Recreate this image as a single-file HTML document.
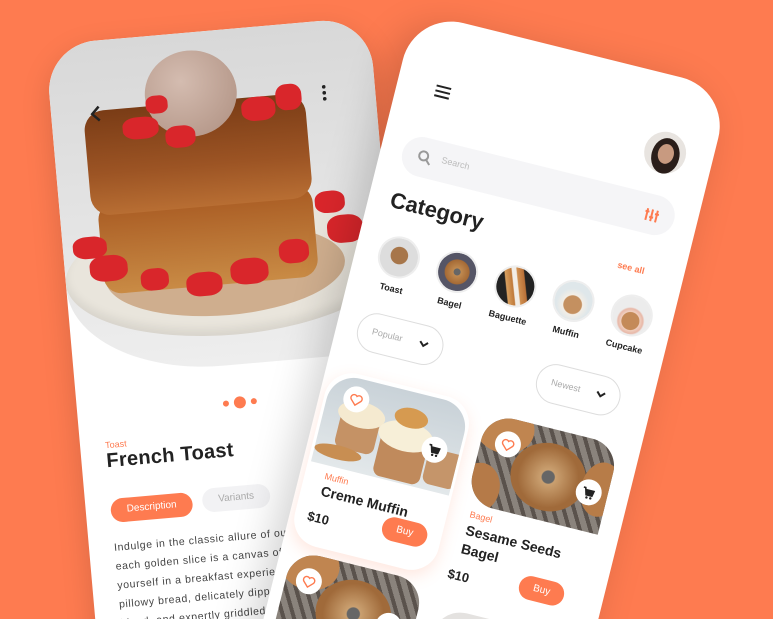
<!DOCTYPE html>
<html><head><meta charset="utf-8">
<style>
*{margin:0;padding:0;box-sizing:border-box}
html,body{width:773px;height:619px;overflow:hidden;background:#FE7B50;font-family:"Liberation Sans",sans-serif}
#W{position:relative;width:773px;height:619px;overflow:hidden;background:#FE7B50}
.abs{position:absolute}
#L{position:absolute;left:45px;top:45px;width:325px;height:700px;background:#fff;border-radius:50px;transform:rotate(-5deg);transform-origin:0 0;overflow:hidden;box-shadow:0 10px 30px rgba(0,0,0,.15)}
#R{position:absolute;left:415px;top:11px;width:325px;height:760px;background:#fff;border-radius:50px;transform:rotate(14deg);transform-origin:0 0;overflow:hidden;box-shadow:-10px 10px 40px rgba(0,0,0,.18)}
.c{border-radius:50%}
.sb{background:#d9262b;border-radius:40%;position:absolute}
.btn{position:absolute;background:#FE7B50;color:#fff;border-radius:20px;font-size:10px;text-align:center}
.pill{position:absolute;border:1px solid #ddd;border-radius:22px;color:#aaa;font-size:9px}
.cat{position:absolute;width:42px;height:42px;border-radius:50%;border:2px solid #eee;overflow:hidden}
.lab{position:absolute;width:60px;text-align:center;font-size:9px;font-weight:bold;color:#222}
.ic{position:absolute;width:26px;height:26px;border-radius:50%;background:#fff;display:flex;align-items:center;justify-content:center}
</style></head><body><div id="W">

<div id="L">
  <div class="abs" style="left:0;top:0;width:325px;height:335px;background:linear-gradient(180deg,#d8d8d8,#eeeeee);border-bottom-left-radius:150px 90px;overflow:hidden">
    <div class="abs c" style="left:0;top:175px;width:330px;height:130px;background:#e9e5dc;box-shadow:inset 0 -6px 10px rgba(0,0,0,.08)"></div>
    <div class="abs c" style="left:40px;top:195px;width:240px;height:90px;background:#b06a2e;opacity:.45"></div>
    <div class="abs" style="left:38px;top:162px;width:215px;height:92px;background:linear-gradient(180deg,#a85a22,#c98b45);border-radius:18px"></div>
    <div class="abs" style="left:32px;top:70px;width:222px;height:105px;background:linear-gradient(180deg,#7a3c16,#9c5424 60%,#b86e33);border-radius:20px"></div>
    <div class="abs c" style="left:95px;top:18px;width:92px;height:86px;background:radial-gradient(circle at 40% 35%,#d4bcb0,#ae8f80)"></div>
    <div class="sb" style="left:70px;top:80px;width:36px;height:22px"></div>
    <div class="sb" style="left:112px;top:92px;width:30px;height:22px"></div>
    <div class="sb" style="left:190px;top:70px;width:34px;height:24px"></div>
    <div class="sb" style="left:225px;top:60px;width:26px;height:26px"></div>
    <div class="sb" style="left:95px;top:60px;width:22px;height:18px"></div>
    <div class="sb" style="left:255px;top:170px;width:30px;height:22px"></div>
    <div class="sb" style="left:265px;top:195px;width:36px;height:28px"></div>
    <div class="sb" style="left:215px;top:215px;width:30px;height:24px"></div>
    <div class="sb" style="left:165px;top:230px;width:38px;height:26px"></div>
    <div class="sb" style="left:120px;top:240px;width:36px;height:24px"></div>
    <div class="sb" style="left:25px;top:215px;width:38px;height:26px"></div>
    <div class="sb" style="left:10px;top:195px;width:34px;height:22px"></div>
    <div class="sb" style="left:75px;top:232px;width:28px;height:22px"></div>
    <svg class="abs" style="left:38px;top:64px" width="14" height="18"><path d="M10 2 L3 9 L10 16" stroke="#222" stroke-width="2.5" fill="none"/></svg>
    <svg class="abs" style="left:270px;top:62px" width="8" height="20"><circle cx="4" cy="4" r="1.8" fill="#222"/><circle cx="4" cy="10" r="1.8" fill="#222"/><circle cx="4" cy="16" r="1.8" fill="#222"/></svg>
  </div>
  <div class="abs c" style="left:146px;top:370px;width:6px;height:6px;background:#FE7B50"></div>
  <div class="abs c" style="left:157px;top:367px;width:12px;height:12px;background:#FE7B50"></div>
  <div class="abs c" style="left:174px;top:370px;width:6px;height:6px;background:#FE7B50"></div>
  <div class="abs" style="left:25px;top:399px;font-size:9px;color:#FE7B50">Toast</div>
  <div class="abs" style="left:25px;top:409px;font-size:20px;font-weight:bold;color:#222;letter-spacing:.3px">French Toast</div>
  <div class="btn" style="left:25px;top:458px;width:82px;height:24px;line-height:24px">Description</div>
  <div class="abs" style="left:117px;top:456px;width:68px;height:24px;line-height:24px;border-radius:14px;background:#f2f2f4;color:#aaa;font-size:10px;text-align:center">Variants</div>
  <div class="abs" style="left:25px;top:498px;white-space:nowrap;font-size:10.5px;line-height:19px;color:#444;letter-spacing:.6px">Indulge in the classic allure of our<br>each golden slice is a canvas of flavor<br>yourself in a breakfast experience<br>pillowy bread, delicately dipped<br>blend, and expertly griddled to</div>
</div>

<div id="R">
  <svg class="abs" style="left:38px;top:65px" width="18" height="14"><path d="M1 2H16M1 7H16M1 12H16" stroke="#222" stroke-width="2"/></svg>
  <div class="abs c" style="left:256px;top:56px;width:42px;height:42px;background:#e8e4e0;overflow:hidden">
    <div class="abs c" style="left:8px;top:6px;width:28px;height:36px;background:#2a1e1a"></div>
    <div class="abs c" style="left:14px;top:12px;width:16px;height:20px;background:#c89a80"></div>
  </div>
  <div class="abs" style="left:22px;top:120px;width:280px;height:40px;border-radius:20px;background:#f5f5f7"></div>
  <svg class="abs" style="left:37px;top:132px" width="16" height="16"><circle cx="6.5" cy="6.5" r="4.5" stroke="#999" stroke-width="2" fill="none"/><path d="M10 10L14 14" stroke="#999" stroke-width="2"/></svg>
  <div class="abs" style="left:62px;top:133px;font-size:9px;color:#bbb">Search</div>
  <svg class="abs" style="left:271px;top:133px" width="16" height="16"><path d="M3 2V14M8 2V14M13 2V14" stroke="#FE7B50" stroke-width="2"/><path d="M1 5H5M6 10H10M11 6H15" stroke="#FE7B50" stroke-width="2"/></svg>
  <div class="abs" style="left:22px;top:176px;font-size:22px;font-weight:bold;color:#222">Category</div>
  <div class="abs" style="left:258px;top:192px;font-size:9px;font-weight:bold;color:#FE7B50">see all</div>
  <div class="cat" style="left:23px;top:222px;background:radial-gradient(circle at 50% 45%,#a7764a 30%,#ddd 32%)"></div>
  <div class="cat" style="left:83px;top:222px;background:radial-gradient(circle,#666 12%,#c08a50 14%,#a56a35 45%,#556 48%)"></div>
  <div class="cat" style="left:143px;top:222px;background:linear-gradient(70deg,#222 30%,#d8a060 32%,#c07a3a 45%,#f2ede6 47%,#f2ede6 55%,#d09050 57%,#b87038 70%,#222 72%)"></div>
  <div class="cat" style="left:203px;top:222px;background:radial-gradient(circle at 50% 60%,#c49060 30%,#f3eee6 33%,#dfe7ea 55%)"></div>
  <div class="cat" style="left:263px;top:222px;background:radial-gradient(circle at 50% 65%,#c48a58 28%,#f0d0c0 30%,#e8b8a8 40%,#ececec 45%)"></div>
  <div class="lab" style="left:14px;top:270px">Toast</div>
  <div class="lab" style="left:74px;top:270px">Bagel</div>
  <div class="lab" style="left:134px;top:270px">Baguette</div>
  <div class="lab" style="left:194px;top:270px">Muffin</div>
  <div class="lab" style="left:254px;top:270px">Cupcake</div>
  <div class="pill" style="left:21px;top:302px;width:88px;height:40px;padding:13px 0 0 14px">Popular<svg class="abs" style="left:62px;top:15px" width="10" height="8"><path d="M1 1L5 5L9 1" stroke="#222" stroke-width="2" fill="none"/></svg></div>
  <div class="pill" style="left:207px;top:308px;width:86px;height:40px;padding:13px 0 0 14px">Newest<svg class="abs" style="left:60px;top:15px" width="10" height="8"><path d="M1 1L5 5L9 1" stroke="#222" stroke-width="2" fill="none"/></svg></div>

  <div class="abs" style="left:5px;top:366px;width:148px;height:178px;border-radius:28px;background:#fff;box-shadow:0 6px 16px rgba(254,123,80,.18)"></div>
  <div class="abs" style="left:8px;top:370px;width:142px;height:92px;border-radius:28px 28px 0 0;overflow:hidden;background:linear-gradient(180deg,#c9d2d8,#e3e8ea)">
    <div class="abs" style="left:18px;top:38px;width:40px;height:34px;background:#c59265;border-radius:0 0 8px 8px"></div>
    <div class="abs c" style="left:14px;top:22px;width:48px;height:26px;background:#f5ead0"></div>
    <div class="abs" style="left:62px;top:50px;width:48px;height:40px;background:#c08a5c;border-radius:0 0 8px 8px"></div>
    <div class="abs c" style="left:58px;top:30px;width:56px;height:30px;background:#f7efd8"></div>
    <div class="abs c" style="left:70px;top:16px;width:34px;height:20px;background:#d69a50"></div>
    <div class="abs" style="left:112px;top:50px;width:34px;height:36px;background:#c5956a;border-radius:0 0 8px 8px"></div>
    <div class="abs c" style="left:0;top:70px;width:48px;height:14px;background:#c88e52"></div>
  </div>
  <div class="ic" style="left:24px;top:378px"><svg width="14" height="13"><path d="M7 12L2 7A2.8 2.8 0 0 1 7 3A2.8 2.8 0 0 1 12 7Z" stroke="#FE7B50" stroke-width="1.4" fill="none"/></svg></div>
  <div class="ic" style="left:112px;top:408px"><svg width="14" height="13"><path d="M1 2H3L5 9H11L12 4H4" stroke="#222" stroke-width="1.6" fill="#222"/><circle cx="6" cy="11.5" r="1.2" fill="#222"/><circle cx="10" cy="11.5" r="1.2" fill="#222"/></svg></div>
  <div class="abs" style="left:25px;top:468px;font-size:9px;color:#FE7B50">Muffin</div>
  <div class="abs" style="left:25px;top:480px;font-size:14px;font-weight:bold;color:#222">Creme Muffin</div>
  <div class="abs" style="left:18px;top:508px;font-size:13px;font-weight:bold;color:#222">$10</div>
  <div class="btn" style="left:93px;top:496px;width:46px;height:24px;line-height:24px">Buy</div>

  <div class="abs" style="left:168px;top:372px;width:136px;height:92px;border-radius:28px 28px 0 28px;overflow:hidden;background:repeating-linear-gradient(60deg,#5a524c 0 4px,#8a837c 4px 10px)">
    <div class="abs c" style="left:-10px;top:-14px;width:60px;height:50px;background:#c08550"></div>
    <div class="abs c" style="left:36px;top:14px;width:76px;height:68px;background:radial-gradient(circle,#666 12%,#caa070 14%,#a06a3a 60%)"></div>
    <div class="abs c" style="left:-12px;top:50px;width:42px;height:50px;background:#b57a48"></div>
    <div class="abs c" style="left:108px;top:20px;width:40px;height:55px;background:#b77c48"></div>
  </div>
  <div class="ic" style="left:182px;top:385px"><svg width="14" height="13"><path d="M7 12L2 7A2.8 2.8 0 0 1 7 3A2.8 2.8 0 0 1 12 7Z" stroke="#FE7B50" stroke-width="1.4" fill="none"/></svg></div>
  <div class="ic" style="left:272px;top:412px"><svg width="14" height="13"><path d="M1 2H3L5 9H11L12 4H4" stroke="#222" stroke-width="1.6" fill="#222"/><circle cx="6" cy="11.5" r="1.2" fill="#222"/><circle cx="10" cy="11.5" r="1.2" fill="#222"/></svg></div>
  <div class="abs" style="left:175px;top:470px;font-size:9px;color:#FE7B50">Bagel</div>
  <div class="abs" style="left:175px;top:482px;width:130px;font-size:14px;line-height:19px;font-weight:bold;color:#222">Sesame Seeds Bagel</div>
  <div class="abs" style="left:168px;top:530px;font-size:13px;font-weight:bold;color:#222">$10</div>
  <div class="btn" style="left:240px;top:520px;width:46px;height:24px;line-height:24px">Buy</div>

  <div class="abs" style="left:12px;top:552px;width:136px;height:120px;border-radius:28px;overflow:hidden;background:repeating-linear-gradient(60deg,#5a524c 0 4px,#8a837c 4px 10px)">
    <div class="abs c" style="left:-10px;top:-14px;width:60px;height:50px;background:#c08550"></div>
    <div class="abs c" style="left:36px;top:14px;width:76px;height:68px;background:radial-gradient(circle,#666 12%,#caa070 14%,#a06a3a 60%)"></div>
  </div>
  <div class="ic" style="left:22px;top:566px"><svg width="14" height="13"><path d="M7 12L2 7A2.8 2.8 0 0 1 7 3A2.8 2.8 0 0 1 12 7Z" stroke="#FE7B50" stroke-width="1.4" fill="none"/></svg></div>
  <div class="ic" style="left:110px;top:590px"><svg width="14" height="13"><path d="M1 2H3L5 9H11L12 4H4" stroke="#222" stroke-width="1.6" fill="#222"/><circle cx="6" cy="11.5" r="1.2" fill="#222"/><circle cx="10" cy="11.5" r="1.2" fill="#222"/></svg></div>
  <div class="abs" style="left:168px;top:572px;width:136px;height:100px;border-radius:28px;background:#e4e2e0"></div>
</div>
</div></body></html>
